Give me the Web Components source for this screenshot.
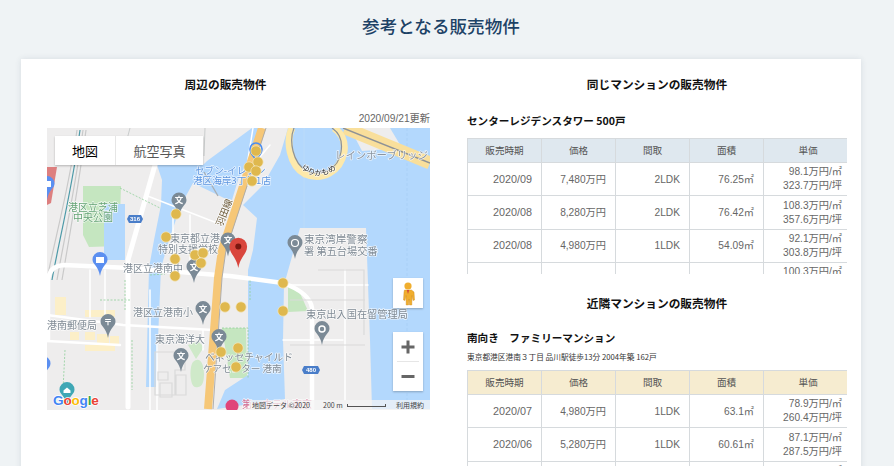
<!DOCTYPE html>
<html lang="ja">
<head>
<meta charset="utf-8">
<title>参考となる販売物件</title>
<style>
html,body{margin:0;padding:0;height:466px;overflow:hidden;background:#eff3f5}
body{font-family:"Liberation Sans","Noto Sans CJK JP",sans-serif;color:#333}
</style>
</head>
<body>
<listing-page>
  <span slot="title">参考となる販売物件</span>
  <div slot="left">
    <section-heading shift="26">周辺の販売物件</section-heading>
    <map-panel updated="2020/09/21更新"></map-panel>
  </div>
  <div slot="right">
    <section-heading>同じマンションの販売物件</section-heading>
    <sales-block name="センターレジデンスタワー 500戸" tone="blue" clip="136" top="21" rows='[["2020/09","7,480万円","2LDK","76.25㎡","98.1万円/㎡","323.7万円/坪"],["2020/08","8,280万円","2LDK","76.42㎡","108.3万円/㎡","357.6万円/坪"],["2020/08","4,980万円","1LDK","54.09㎡","92.1万円/㎡","303.8万円/坪"],["2020/08","5,480万円","1LDK","54.62㎡","100.3万円/㎡","331.7万円/坪"]]'></sales-block>
    <section-heading style="margin-top:4px">近隣マンションの販売物件</section-heading>
    <sales-block name="南向き　ファミリーマンション" sub="東京都港区港南３丁目 品川駅徒歩13分 2004年築 162戸" tone="yellow" clip="110" top="19" rows='[["2020/07","4,980万円","1LDK","63.1㎡","78.9万円/㎡","260.4万円/坪"],["2020/06","5,280万円","1LDK","60.61㎡","87.1万円/㎡","287.5万円/坪"],["2020/06","5,180万円","1LDK","60.61㎡","85.5万円/㎡","282.0万円/坪"]]'></sales-block>
  </div>
</listing-page>

<script>
const JP='"Liberation Sans","Noto Sans CJK JP",sans-serif';

class ListingPage extends HTMLElement{
  constructor(){
    super();
    this.attachShadow({mode:'open'}).innerHTML=`
    <style>
      :host{display:block;font-family:${JP}}
      h1{margin:0 33px 0 21px;height:59px;display:flex;align-items:center;justify-content:center;
         font:500 17.6px "Noto Sans CJK JP",sans-serif;color:#1d4266;box-sizing:border-box;padding-bottom:9px}
      .card{margin:0 33px 0 21px;background:#fff;box-shadow:0 0 6px rgba(40,60,80,.12);
         display:grid;grid-template-columns:383px 380px;column-gap:37px;padding:0 14px 0 26px;height:420px;overflow:hidden}
    </style>
    <h1><slot name="title"></slot></h1>
    <div class="card"><slot name="left"></slot><slot name="right"></slot></div>`;
  }
}
customElements.define('listing-page',ListingPage);

class SectionHeading extends HTMLElement{
  connectedCallback(){
    const shift=this.getAttribute('shift')||0;
    this.attachShadow({mode:'open'}).innerHTML=`
    <style>
      :host{display:block;text-align:center;font:700 11.7px/18px "Noto Sans CJK JP",sans-serif;color:#111;padding:16px ${shift}px 0 0}
    </style><slot></slot>`;
  }
}
customElements.define('section-heading',SectionHeading);

class SalesBlock extends HTMLElement{
  connectedCallback(){
    const rows=JSON.parse(this.getAttribute('rows'));
    const head=['販売時期','価格','間取','面積','単価'];
    const sub=this.getAttribute('sub');
    const tone=this.getAttribute('tone')==='yellow'?'#f6ecd0':'#dfe8ef';
    this.attachShadow({mode:'open'}).innerHTML=`
    <style>
      :host{display:block;padding-top:${this.getAttribute('top')}px}
      .name{font:700 10.6px/14px "Noto Sans CJK JP",sans-serif;color:#111;margin:0}
      .sub{font:400 7.7px/11px "Noto Sans CJK JP",sans-serif;color:#333;margin:6px 0 0}
      .clip{height:${this.getAttribute('clip')}px;overflow:hidden;margin-top:${sub?8:10}px}
      .grid{display:grid;grid-template-columns:74px 74px 74px 74px 89px;width:386px;
            border-top:1px solid #d6dadd;border-left:1px solid #d6dadd;box-sizing:border-box;
            font:400 10.2px/15px ${JP};color:#666}
      .c{border-right:1px solid #d6dadd;border-bottom:1px solid #d6dadd;box-sizing:border-box;height:33.4px;
         display:flex;flex-direction:column;justify-content:center;align-items:flex-end;padding-right:9px;white-space:nowrap}
      .c.date{font-size:10.8px}
      .h{background:${tone};height:24px;align-items:center;padding:0;font-size:9.6px;color:#555;font-family:"Noto Sans CJK JP",sans-serif}
      .u{line-height:14px;padding-right:10px}
    </style>
    <p class="name">${this.getAttribute('name')}</p>
    ${sub?`<p class="sub">${sub}</p>`:''}
    <div class="clip"><div class="grid">
      ${head.map(h=>`<div class="c h">${h}</div>`).join('')}
      ${rows.map(r=>`<div class="c date">${r[0]}</div><div class="c">${r[1]}</div><div class="c">${r[2]}</div><div class="c">${r[3]}</div><div class="c u"><span>${r[4]}</span><span>${r[5]}</span></div>`).join('')}
    </div></div>`;
  }
}
customElements.define('sales-block',SalesBlock);

class MapPanel extends HTMLElement{
  connectedCallback(){
    const dots=[[256,151],[258,162],[249,167],[256,171],[252,181],[176,214],[166,237],[175,259],[195,255],[203,253],[201,263],[175,276],[225,307],[241,307],[221,352],[238,348],[236,367],[283,283],[283,311]];
    const pin=(x,y,c,inner)=>`<g transform="translate(${x} ${y})"><path d="M0 10C-2-1-7.5-1.5-7.5-6.5a7.5 7.5 0 0 1 15 0C7.5-1.5 2-1 0 10z" fill="${c}"/>${inner}</g>`;
    const school=(x,y)=>pin(x,y,'#7b8a96',`<text x="0" y="-3.3" text-anchor="middle" font-size="8.5" font-weight="700" fill="#fff">文</text>`);
    const label=(x,y,t,c='#7f8a94',s=10)=>`<text class="l" x="${x}" y="${y+3.5}" fill="${c}" font-size="${s}">${t}</text>`;
    this.attachShadow({mode:'open'}).innerHTML=`
    <style>
      :host{display:block}
      .up{font:400 10.2px/12px ${JP};color:#666;text-align:right;margin-top:20px;height:15px}
      .map{position:relative;width:383px;height:282px;overflow:hidden;background:#eeeded}
      svg{display:block;filter:blur(.25px)}
      .l{font-family:"Noto Sans CJK JP",sans-serif;paint-order:stroke;stroke:rgba(255,255,255,.75);stroke-width:1.5px;stroke-linejoin:round}
      .types{position:absolute;left:8px;top:8px;height:29px;width:148px;display:flex;background:#fff;box-shadow:0 1px 2px rgba(0,0,0,.25);font:400 13px/29px "Noto Sans CJK JP",sans-serif}
      .types span{display:block;text-align:center;color:#565656}
      .types span:first-child{width:60px;color:#000;border-right:1px solid #e6e6e6}
      .types span:last-child{flex:1}
      .peg,.zoom{position:absolute;left:346px;width:30px;background:#fff;box-shadow:0 1px 2px rgba(0,0,0,.25)}
      .peg{top:150px;height:30px}
      .zoom{top:204px;height:59px}
      .zoom svg{width:30px;height:59px}
      .foot{position:absolute;right:0;bottom:0;left:202px;height:10px;background:rgba(245,245,245,.72);font:400 7px/10px "Noto Sans CJK JP",sans-serif;color:#444;display:flex;white-space:nowrap}
      .foot span:nth-child(1){margin-left:3px;width:71px}
      .foot span:nth-child(2){width:24px}
      .foot i{display:block;width:39px;height:3px;margin-top:4px;border:1px solid #555;border-top:0;box-sizing:border-box}
      .foot span:nth-child(4){margin-left:10px}
      .logo{position:absolute;left:6px;bottom:1px;font:700 13.6px/17px "Liberation Sans",sans-serif;letter-spacing:-.2px;paint-order:stroke;-webkit-text-stroke:1.4px #fff}
      .logo b{font-weight:700;paint-order:stroke}
    </style>
    <div class="up">${this.getAttribute('updated')}</div>
    <div class="map">
      <svg width="383" height="282" viewBox="47 128 383 282" font-family="'Noto Sans CJK JP',sans-serif">
        <rect x="47" y="128" width="383" height="282" fill="#eeeded"/>
        <path d="M83 186h38l-2 60-30 1-6-12z" fill="#c5e6c0"/>
        <path d="M222 328h24l1 50h-17z" fill="#c5e6c0"/>
        <path d="M188 345l10-4 6 6-8 12zM193 362c6-6 11 0 11 12s-4 14-9 13-6-20-2-25z" fill="#cfe9c9"/>
        <path d="M288 285l12 8 8 18-20 1z" fill="#c5e6c0"/>
        <path d="M104 204h21v56h-21z" fill="#b3d8fd"/>
        <path d="M157 165h46l4-4 45-33h8l-6 20-16 32-6 20-8-2-31-15-12 22-12 35-8 28-5 119h-10l3-119 5-28 7-35 1-25z" fill="#b3d8fd"/>
        <path d="M288 128H430V409H372L370 340 366 228H300L284 285 283 340 285 399 217 409 225 390 248 375V270L253 250 257 218 243 205 263 185 280 155z" fill="#b3d8fd"/>
        <path d="M350 128h40l12 20-40 3z" fill="#eeeded"/>
        <path d="M304 128v100" stroke="#c3dff8" stroke-width=".6"/>
        <path d="M407 128v281" stroke="#a6cff5" stroke-width=".6" stroke-dasharray="3 2"/>
        <g fill="#fcefc8">
          <path d="M55 297h11v18H55zM85 310h30v7H85zM70 332h9v8h-9zM85 332h10v8H85zM97 334h12v10H97zM110 336h9v10h-9zM85 345h30v6H85z"/>
        </g>
        <path d="M47 167h10l-6 36-4 2z" fill="#dd7f7f"/>
        <path d="M47 280c5-30 22-90 30-150M57 280c5-30 18-90 26-150M62 280c5-30 16-90 24-150" fill="none" stroke="#c9c9c9" stroke-width="1.2"/>
        <path d="M52 280c5-30 20-90 28-150" fill="none" stroke="#4d9aa8" stroke-width="1.2"/>
        <g fill="none" stroke="#fff" stroke-linecap="round" stroke-linejoin="round">
          <path d="M155 165 128 260V407" stroke-width="5"/>
          <path d="M48 340V282q0-16 16-17l66 3 100 8 53 7q27 10 29 25V409" stroke-width="4.5"/>
          <path d="M47 315l76 10 90 5M47 341l73 4" stroke-width="2.5"/>
          <path d="M90 270v47M105 270v47M145 195l72 28M173 210v58M190 215v55M150 290l0 120M157 340v70M203 330v20M283 340h60M283 285h85M345 270v130" stroke-width="1.5"/>
          <path d="M253 128l-8 50M270 145l-25 30" stroke-width="1.5"/>
        </g>
        <path d="M218 196 204 172" stroke="#a9adb1" stroke-width="1.3"/>
        <path d="M205 128l-1 28M130 128l-8 30" stroke="#c9cccc" stroke-width="1"/>
        <g fill="none" stroke="#8fcf9a" stroke-width=".8" stroke-dasharray="2 1.5">
          <path d="M100 300h30M125 280v30M150 275l15-1M222 328h26v50M120 188l40 20M65 350l-2 40M132 340v50M250 300v-20"/>
        </g>
        <g fill="none" stroke="#dadada" stroke-width="1.2">
          <path d="M155 352h30v18h-10v25h-20zM158 372h10v8h-10zM160 383h12v14h-12zM176 375h10v20h-10z"/>
          <path d="M290 300h75M290 345h75M318 270h46v65"/>
        </g>
        <path d="M262 128 245 180 222 250 218 278 208 409" fill="none" stroke="#f6c777" stroke-width="8"/>
        <path d="M266 128 249 180 226 250 222 278 213 409" fill="none" stroke="#a8a8a8" stroke-width=".9"/>
        <path d="M345 128 430 163" stroke="#f9df9b" stroke-width="13" fill="none"/>
        <path d="M343 128 430 163" stroke="#8e9296" stroke-width="1.4" fill="none"/>
        <path d="M292 128C286 140 289 165 305 174 322 181 340 172 344 152 346 140 340 132 334 128" fill="none" stroke="#fde9ab" stroke-width="7"/>
        <path d="M294 128C289 140 292 163 307 171 322 177 338 170 341 152 343 140 338 132 332 128" fill="none" stroke="#8e9296" stroke-width="1.2"/>
        <path d="M256 160c-2-4-6-6-6-11a6 6 0 0 1 12 0c0 5-4 7-6 11z" fill="none" stroke="#4b8df0" stroke-width="1.6"/>
        ${pin(100,266,'#5b8ff0','<rect x="-4" y="-9" width="8" height="6" fill="#fff"/>')}
        ${pin(47,190,'#5b8ff0','<rect x="-4" y="-9" width="8" height="6" fill="#fff"/>')}
        ${pin(43,370,'#5b8ff0','')}
        ${pin(67,396,'#3fa7b5','<path d="M-3.5-5.5 0-8.5 3.5-5.5V-3H-3.5z" fill="#fff"/>')}
        ${school(179,206.5)}${school(194,273)}${school(228,246.5)}${school(203,315)}${school(219,343)}${school(181,362)}
        ${pin(108,328,'#7b8a96','<text x="0" y="-3.3" text-anchor="middle" font-size="8.5" font-weight="700" fill="#fff">〒</text>')}
        ${pin(295,249,'#7b8a96','<circle cy="-6" r="3.5" fill="none" stroke="#fff" stroke-width="1.2"/>')}
        ${pin(322,335,'#7b8a96','<circle cy="-6" r="3" fill="none" stroke="#fff" stroke-width="1.5"/>')}
        <circle cx="232" cy="406" r="6.5" fill="#e0447a"/>
        ${label(68,207,'港区立芝浦','#64a374')}${label(73,217,'中央公園','#64a374')}
        ${label(195,170,'セブン-イレブン','#5c95e0',9.6)}${label(193,180,'港区海岸3丁目1店','#5c95e0',9.6)}
        ${label(170,238,'東京都立港')}${label(158,249,'特別支援学校')}
        ${label(123,268,'港区立港南中')}${label(133,312,'港区立港南小')}
        ${label(155,339,'東京海洋大')}${label(47,325,'港南郵便局')}
        ${label(335,155,'レインボーブリッジ','#8b95a1',10.4)}
        ${label(304,239,'東京湾岸警察','#7f8a94',10.6)}${label(304,251,'署 第五台場交番','#7f8a94',10.2)}
        ${label(306,314,'東京出入国在留管理局','#7f8a94',10.2)}
        ${label(205,357,'ベネッセチャイルド','#7f8a94',9.8)}${label(203,368,'ケアセンター 港南','#7f8a94',9.6)}
        ${label(242,404,'第一ホテル東京','#d0648a',10)}
        <text x="0" y="0" transform="translate(222 227) rotate(-68)" font-size="9.5" fill="#6d5b3a" class="l">羽田線</text>
        <path id="yk" d="M301 168Q318 184 339 167" fill="none"/>
        <text font-size="7.8" fill="#333" class="l"><textPath href="#yk">ゆりかもめ</textPath></text>
        <g fill="#dfb84e" stroke="#f4e7bf" stroke-width=".7">
          ${dots.map(d=>`<circle cx="${d[0]}" cy="${d[1]}" r="5.2"/>`).join('')}
        </g>
        <g font-size="6" font-weight="700" text-anchor="middle" fill="#fff" font-family="'Liberation Sans',sans-serif">
          <path d="M129 215h12l2 4-2 4h-12l-2-4z" fill="#4a7ec9"/><text x="135" y="221.2">316</text>
          <path d="M304 366h14l2 4-2 4h-14l-2-4z" fill="#4a7ec9"/><text x="311" y="372.2">480</text>
        </g>
        <path d="M238.3 268C236 256 229.5 254 229.5 246.5a8.8 8.8 0 0 1 17.6 0C247.1 254 240.6 256 238.3 268z" fill="#d9463d"/>
        <circle cx="238.3" cy="246.5" r="3" fill="#7a1710"/>
      </svg>
      <div class="types"><span>地図</span><span>航空写真</span></div>
      <div class="peg"><svg width="30" height="30" viewBox="0 0 30 30"><circle cx="15" cy="8" r="3.6" fill="#f0ae2e"/><path d="M11.5 12h7l2.500 2 .5 8-1.500.5-1-5-.2 9.500h-2.300l-.5-6-.5 6h-2.300l-.2-9.500-1 5-1.500-.5.5-8z" fill="#f0ae2e" stroke="#c9861a" stroke-width=".4"/><path d="M13.800 12l1.200 4 1.200-4z" fill="#d04a3a"/></svg></div>
      <div class="zoom"><svg viewBox="0 0 30 59"><path d="M13.500 8.500h3v5h5v3h-5v5h-3v-5h-5v-3h5z" fill="#666"/><path d="M4 29.500h22" stroke="#e6e6e6"/><path d="M8.500 43h13v3h-13z" fill="#666"/></svg></div>
      <div class="logo"><b style="color:#4285f4">G</b><b style="color:#ea4335">o</b><b style="color:#fbbc05">o</b><b style="color:#4285f4">g</b><b style="color:#34a853">l</b><b style="color:#ea4335">e</b></div>
      <div class="foot"><span>地図データ ©2020</span><span>200 m</span><i></i><span>利用規約</span></div>
    </div>`;
  }
}
customElements.define('map-panel',MapPanel);
</script>
</body>
</html>
